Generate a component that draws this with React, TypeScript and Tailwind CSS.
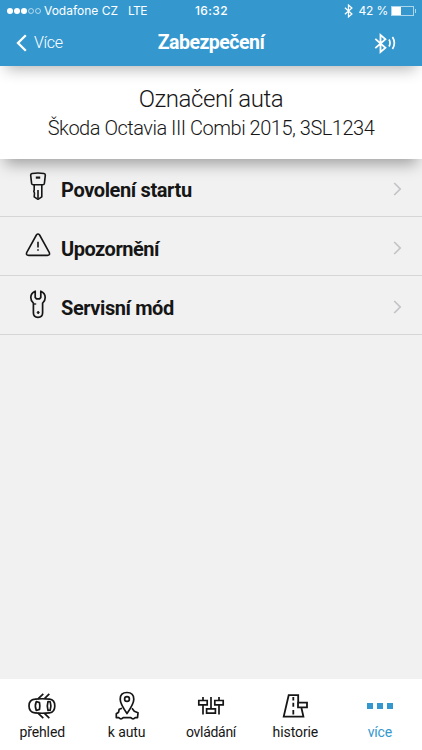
import type { ReactNode } from "react"

type MenuItem = {
	label: string
	icon: ReactNode
	labelClass: string
}

type TabItem = {
	label: string
	icon: ReactNode
	labelClass: string
}

function BluetoothGlyph({ className }: { className?: string }) {
	return (
		<svg viewBox="0 0 9 14" className={className} fill="none" stroke="currentColor" strokeWidth="1.25">
			<path d="M0.9 3.8 7.9 10 4.5 12.9V1.1L7.9 4 0.9 10.2" />
		</svg>
	)
}

function KeyIcon() {
	return (
		<svg viewBox="0 0 18 29" className="mt-[2px] h-[29px] w-[18px]" fill="none" stroke="currentColor" strokeWidth="1.6" strokeLinejoin="round">
			<path d="M3.1 1.5Q9 .4 14.9 1.5 16.4 1.8 16.3 3.3L15.4 11.4Q15.2 12.8 13.8 12.8H4.2Q2.8 12.8 2.6 11.4L1.7 3.3Q1.6 1.8 3.1 1.5Z" />
			<path d="M6.8 5.6h4.4" strokeWidth="2.2" />
			<path d="M5.2 12.8V18L4.8 19.5 5.5 21 5.2 24.8 9 27.3 12.8 24.8V12.8M9 18v8" />
		</svg>
	)
}

function WarningIcon() {
	return (
		<svg viewBox="0 0 26 24" className="h-[24px] w-[26px]" fill="none" stroke="currentColor" strokeWidth="1.6" strokeLinejoin="round">
			<path d="M11.4 2Q13 .1 14.6 2L24.2 19.3Q25.4 22.4 22.3 22.4H3.7Q.6 22.4 1.8 19.3Z" />
			<path d="M13 8.8v5.7M13 16.2v1.6" />
		</svg>
	)
}

function WrenchIcon() {
	return (
		<svg viewBox="0 0 18 29" className="mt-[2px] h-[29px] w-[18px]" fill="none" stroke="currentColor" strokeWidth="1.7" strokeLinejoin="round">
			<path d="M6.2 1.2Q1.8 3 1.8 7.4 1.8 11 4.4 13.2V22.8Q4.4 27.4 9 27.4T13.6 22.8V13.2Q16.2 11 16.2 7.4 16.2 3 11.8 1.2V7.4L10.7 8.8H7.3L6.2 7.4Z" />
			<path d="M4.6 14h2.6" strokeWidth="1.3" />
			<circle cx="9.2" cy="22.5" r="1" fill="currentColor" strokeWidth="1" />
		</svg>
	)
}

function CarIcon() {
	return (
		<svg viewBox="0 0 30 28" className="h-[28px] w-[30px]" fill="none" stroke="currentColor" strokeWidth="1.7" strokeLinejoin="round">
			<path d="M8 7.2Q15 6.3 22.5 7.2 27.8 7.8 27.8 14T22.5 20.8Q15 21.7 8 20.8 2 20.3 2 14T8 7.2Z" />
			<path d="M9.3 9.5 12.5 10.6Q13.2 14 12.5 17.4L9.3 18.5Q7.4 14 9.3 9.5ZM21 9.5 23.2 9.8Q24.6 14 23.2 18.2L21 18.5Q19.6 14 21 9.5Z" />
			<path d="M11 6.8 16.3 1.8M17.5 6.6 22.3 1.8M11 21.2l5.3 5M17.5 21.4l4.8 4.8" />
		</svg>
	)
}

function PinIcon() {
	return (
		<svg viewBox="0 0 26 29" className="h-[29px] w-[26px]" fill="none" stroke="currentColor" strokeWidth="1.7" strokeLinejoin="round">
			<path d="M13 22.6Q6.2 12.6 6.2 8.2 6.2 1.5 13 1.5T19.8 8.2Q19.8 12.6 13 22.6Z" />
			<circle cx="13" cy="8" r="2.4" />
			<path d="M8 17.2 5.2 18.2 4.6 21.2 2.3 22.8V26.6H4.7Q7 29 9.2 26.6H16.8Q19 29 21.3 26.6H23.5L24 21.8 20.3 20.2 18 17.2" />
		</svg>
	)
}

function SlidersIcon() {
	return (
		<svg viewBox="0 0 28 20" className="h-[20px] w-[28px]" fill="none" stroke="currentColor" strokeWidth="1.7">
			<path d="M1.8 4.5h8.4v4.4H1.8ZM9.6 12.8h8.8v4.4H9.6ZM17.8 4.5h8.4v4.4h-8.4ZM6 1v3.5M6 8.9v9.6M14 1v11.8M22 1v3.5M22 8.9v9.6" />
		</svg>
	)
}

function RoadIcon() {
	return (
		<svg viewBox="0 0 26 26" className="h-[26px] w-[26px]" fill="none" stroke="currentColor" strokeWidth="1.8">
			<path d="M16.2 9V2.2H6.7L1.7 23.6H21.4L19.4 14.8M16 9.7h9v4.6h-9Z" />
			<path d="M11.3 4v3.4M11.3 9.8v4M11.3 17v4.5" />
		</svg>
	)
}

function DotsIcon() {
	return (
		<span className="flex gap-[4px]">
			<span className="size-[6px] bg-[#3498cf]" />
			<span className="size-[6px] bg-[#3498cf]" />
			<span className="size-[6px] bg-[#3498cf]" />
		</span>
	)
}

const MENU: MenuItem[] = [
	{ label: "Povolení startu", icon: <KeyIcon />, labelClass: "tracking-[-0.38px]" },
	{ label: "Upozornění", icon: <WarningIcon />, labelClass: "tracking-[-0.5px]" },
	{ label: "Servisní mód", icon: <WrenchIcon />, labelClass: "tracking-[-0.42px]" },
]

const TABS: TabItem[] = [
	{ label: "přehled", icon: <CarIcon />, labelClass: "tracking-[-0.1px]" },
	{ label: "k autu", icon: <PinIcon />, labelClass: "tracking-[-0.1px]" },
	{ label: "ovládání", icon: <SlidersIcon />, labelClass: "tracking-[-0.3px]" },
	{ label: "historie", icon: <RoadIcon />, labelClass: "tracking-[-0.1px]" },
	{ label: "více", icon: <DotsIcon />, labelClass: "tracking-[-0.2px] text-[#3498cf]" },
]

function StatusBar() {
	return (
		<div className="grid h-[22px] grid-cols-[1fr_auto_1fr] items-center pr-[6px] pl-[7px] font-[Inter,sans-serif] text-[12px] leading-none">
			<div className="flex items-center">
				<div className="mr-[3px] flex gap-[1px]">
					<span className="size-[6px] rounded-full bg-white" />
					<span className="size-[6px] rounded-full bg-white" />
					<span className="size-[6px] rounded-full bg-white" />
					<span className="size-[6px] rounded-full border border-white/60" />
					<span className="size-[6px] rounded-full border border-white/60" />
				</div>
				<span>Vodafone CZ</span>
				<span className="ml-[10px] tracking-[-0.6px]">LTE</span>
			</div>
			<span className="text-[12px] font-medium tracking-[0.4px]">16:32</span>
			<div className="flex items-center justify-end">
				<BluetoothGlyph className="mr-[6px] h-[14px] w-[9px]" />
				<span className="mr-[3px] tracking-[-0.2px]">42 %</span>
				<span className="flex h-[10px] w-[23px] border border-white/60">
					<span className="w-[9px] bg-white" />
				</span>
				<span className="ml-[1px] h-[4px] w-[1px] bg-white/60" />
			</div>
		</div>
	)
}

export default function App() {
	return (
		<div className="flex h-[750px] w-[422px] flex-col overflow-hidden bg-[#f1f1f1] font-[Roboto,sans-serif] text-[#161616]">
			<header className="z-20 h-[66px] shrink-0 bg-[#3498cf] text-white shadow-[0_9px_14px_-6px_rgba(0,0,0,0.3)]">
				<StatusBar />
				<div className="grid h-[42px] grid-cols-[1fr_auto_1fr] items-center px-[16px]">
					<button type="button" className="flex items-center gap-[7px] text-[16px] font-light">
						<svg viewBox="0 0 11 18" className="h-[18px] w-[11px]" fill="none" stroke="currentColor" strokeWidth="2.3">
							<path d="M9.8 1.2 2 9l7.8 7.8" />
						</svg>
						<span className="tracking-[-0.35px]">Více</span>
					</button>
					<h1 className="text-[19.5px] font-bold tracking-[-0.5px]">Zabezpečení</h1>
					<div className="flex items-center justify-end gap-[1px] pr-[10px]">
						<BluetoothGlyph className="h-[21px] w-[13px]" />
						<svg viewBox="0 0 8 16" className="h-[16px] w-[8px]" fill="none" stroke="currentColor" strokeWidth="1.7">
							<path d="M1 4.5Q3.1 8 1 11.5M4.5 2Q8.2 8 4.5 14" />
						</svg>
					</div>
				</div>
			</header>

			<section className="z-10 flex h-[93px] shrink-0 flex-col items-center bg-white pt-[18px] shadow-[0_10px_14px_-5px_rgba(0,0,0,0.34)]">
				<h2 className="text-[24px] leading-[30px] font-light tracking-[-0.4px]">Označení auta</h2>
				<p className="text-[20px] leading-[28px] font-light tracking-[-0.48px] whitespace-nowrap">Škoda Octavia III Combi 2015, 3SL1234</p>
			</section>

			<ul className="-mt-px flex-1">
				{MENU.map((item) => (
					<li key={item.label} className="flex h-[59px] items-center border-b border-[#d6d6d6] pr-[20px] pl-[22px]">
						<span className="-mt-[3px] flex w-[32px] justify-center">{item.icon}</span>
						<span className={`mt-[6px] ml-[7px] flex-1 text-[20px] font-bold ${item.labelClass}`}>{item.label}</span>
						<svg viewBox="0 0 9 14" className="mt-[3px] h-[14px] w-[9px] text-[#c3c3c6]" fill="none" stroke="currentColor" strokeWidth="1.7">
							<path d="m1.2 1 6 6-6 6" />
						</svg>
					</li>
				))}
			</ul>

			<nav className="grid h-[71px] shrink-0 grid-cols-5 bg-white">
				{TABS.map((tab) => (
					<div key={tab.label} className="flex flex-col items-center pt-[11px]">
						<span className="flex h-[31px] items-center">{tab.icon}</span>
						<span className={`text-[14px] leading-[22px] ${tab.labelClass}`}>{tab.label}</span>
					</div>
				))}
			</nav>
		</div>
	)
}
